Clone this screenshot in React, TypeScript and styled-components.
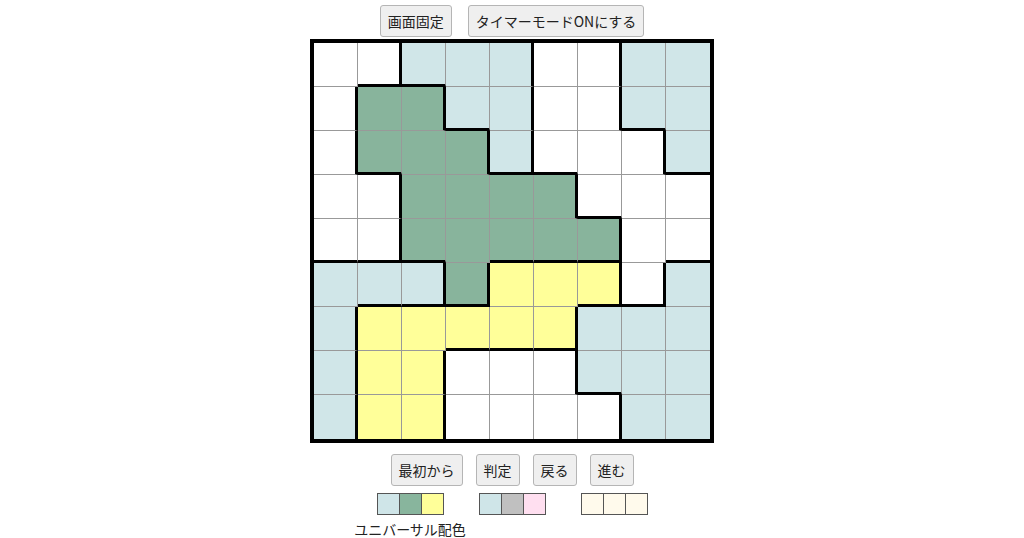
import React from 'react';
import styled, { createGlobalStyle } from 'styled-components';

const GlobalStyle = createGlobalStyle`
  html, body {
    margin: 0;
    padding: 0;
    background: #fff;
    font-family: "Noto Sans CJK JP", "Noto Sans", sans-serif;
    color: #222;
  }
`;

const COLORS: Record<string, string> = {
  w: '#ffffff',
  b: '#d0e6e8',
  g: '#88b49c',
  y: '#ffff99',
};

const BOARD = [
  'wwbbbwwbb',
  'wggbbwwbb',
  'wgggbwwwb',
  'wwggggwww',
  'wwgggggww',
  'bbbgyyywb',
  'byyyyybbb',
  'byywwwbbb',
  'byywwwwbb',
];

const Page = styled.div`
  display: flex;
  flex-direction: column;
  align-items: center;
  padding-top: 5px;
`;

const ButtonRow = styled.div<{ $gap: number }>`
  display: flex;
  gap: ${({ $gap }) => $gap}px;
`;

const Button = styled.button`
  font-family: "Noto Sans CJK JP", "Noto Sans", sans-serif;
  font-size: 14px;
  line-height: 20px;
  color: #222;
  background: #efefef;
  border: 1px solid #b5b5b5;
  border-radius: 3px;
  padding: 5px 7px;
  cursor: pointer;
`;

const Board = styled.div`
  margin-top: 2px;
  display: grid;
  grid-template-columns: repeat(9, 44px);
  grid-template-rows: repeat(9, 44px);
  border: 4px solid #000;
`;

const Cell = styled.div<{ $fill: string; $right: string; $bottom: string }>`
  box-sizing: border-box;
  background: ${({ $fill }) => $fill};
  border-right: ${({ $right }) => $right};
  border-bottom: ${({ $bottom }) => $bottom};
`;

const BottomButtons = styled(ButtonRow)`
  margin-top: 11px;
`;

const Palettes = styled.div`
  display: flex;
  align-items: flex-start;
  gap: 35px;
  margin-top: 7px;
`;

const PaletteGroup = styled.div`
  display: flex;
  flex-direction: column;
  align-items: center;
`;

const Swatches = styled.div`
  display: flex;
  border: 1px solid #555;
`;

const Swatch = styled.div<{ $color: string; $last?: boolean }>`
  width: 21px;
  height: 20px;
  background: ${({ $color }) => $color};
  border-right: ${({ $last }) => ($last ? 'none' : '1px solid #555')};
`;

const PaletteLabel = styled.div`
  width: 0;
  display: flex;
  justify-content: center;
  white-space: nowrap;
  font-size: 14px;
  line-height: 16px;
  margin-top: 6px;
`;

const THIN = '1px solid #999';
const THICK = '3px solid #000';

const palettes = [
  { colors: ['#cfe5e8', '#88b59d', '#ffff99'], label: 'ユニバーサル配色' },
  { colors: ['#cfe5e8', '#c0c0c0', '#ffdff0'] },
  { colors: ['#fffaec', '#fffaec', '#fffaec'] },
];

export default function App() {
  return (
    <>
      <GlobalStyle />
      <Page>
        <ButtonRow $gap={16}>
          <Button>画面固定</Button>
          <Button>タイマーモードONにする</Button>
        </ButtonRow>
        <Board>
          {BOARD.map((row, r) =>
            row.split('').map((c, col) => {
              const right =
                col === 8 ? 'none' : row[col + 1] !== c ? THICK : THIN;
              const bottom =
                r === 8 ? 'none' : BOARD[r + 1][col] !== c ? THICK : THIN;
              return (
                <Cell
                  key={`${r}-${col}`}
                  $fill={COLORS[c]}
                  $right={right}
                  $bottom={bottom}
                />
              );
            })
          )}
        </Board>
        <BottomButtons $gap={13}>
          <Button>最初から</Button>
          <Button>判定</Button>
          <Button>戻る</Button>
          <Button>進む</Button>
        </BottomButtons>
        <Palettes>
          {palettes.map((p, i) => (
            <PaletteGroup key={i}>
              <Swatches>
                {p.colors.map((c, j) => (
                  <Swatch key={j} $color={c} $last={j === p.colors.length - 1} />
                ))}
              </Swatches>
              {p.label && (
                <PaletteLabel>
                  <span>{p.label}</span>
                </PaletteLabel>
              )}
            </PaletteGroup>
          ))}
        </Palettes>
      </Page>
    </>
  );
}
